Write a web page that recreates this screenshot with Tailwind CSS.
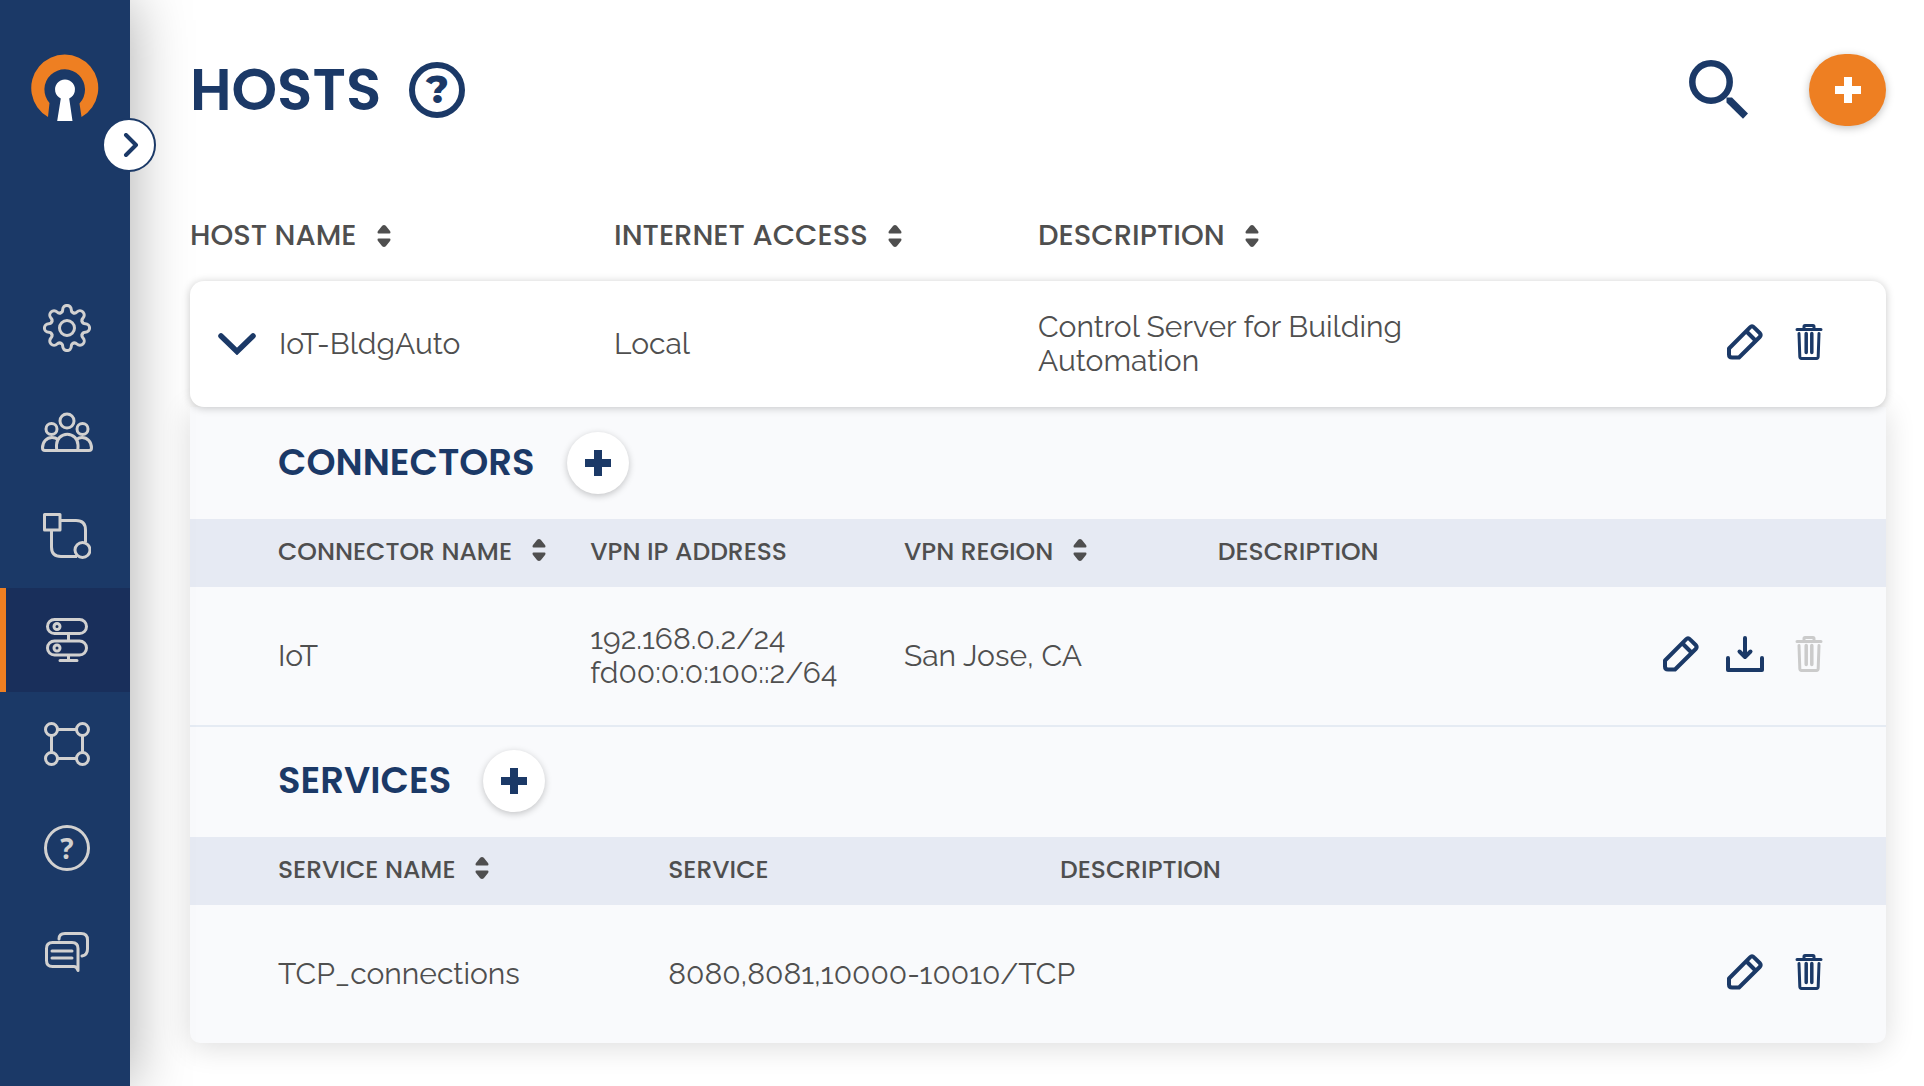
<!DOCTYPE html>
<html lang="en">
<head>
<meta charset="utf-8">
<meta name="viewport" content="width=device-width, initial-scale=1">
<title>Hosts</title>
<script src="https://cdn.jsdelivr.net/npm/@tailwindcss/browser@4"></script>
</head>
<body class="bg-white font-[Poppins,Inter,sans-serif] text-[#4f4f4f]">
<svg class="hidden" aria-hidden="true">
  <symbol id="sort" viewBox="0 0 14 22"><path fill="currentColor" d="M5.200.8Q7-.8 8.800.8L13.200 6.200Q14 8.400 12.500 8.600H1.500Q0 8.400.8 6.200ZM5.200 21.200Q7 22.800 8.800 21.200L13.200 15.800Q14 13.600 12.500 13.400H1.500Q0 13.600.8 15.800Z"/></symbol>
  <symbol id="pencil" viewBox="0 0 36 36"><g fill="none" stroke="currentColor" stroke-width="4" stroke-linejoin="round"><path d="M2 24.500 23 3.300Q25 1.200 27 3.300L32.700 9Q34.700 11 32.700 13L12 33.500H5Q2 33.500 2 30.500Z"/><path d="M19.500 7.500 28.500 16.500"/></g></symbol>
  <symbol id="trash" viewBox="0 0 28 36"><g fill="none" stroke="currentColor" stroke-width="3" stroke-linecap="round" stroke-linejoin="round"><path d="M2 5.500H26M9 5V2.500Q9 1.500 10 1.500H18Q19 1.500 19 2.500V5M4 9.500 4.800 32.500Q4.900 34.500 6.500 34.500H21.500Q23.100 34.500 23.200 32.500L24 9.500"/><path stroke-width="3.500" d="M11.200 9.500V28.500M16.800 9.500V28.500"/></g></symbol>
  <symbol id="plus" viewBox="0 0 26 26"><path fill="currentColor" d="M9 0H17V9H26V17H17V26H9V17H0V9H9Z"/></symbol>
</svg>
<div class="flex min-h-screen">
  <aside class="relative z-10 w-[130px] shrink-0 bg-[#1b3967] shadow-[0_0_60px_rgba(0,0,0,0.34)]">
    <a href="#" aria-label="Home" class="flex justify-center pt-[54px]">
      <svg class="h-[67px] w-[68px]" viewBox="0 0 68 67">
        <path fill="#ee7f22" d="M17 63A33.500 33.500 0 1 1 50.500 63L48.500 49.500A20.300 20.300 0 1 0 18.500 49Z"/>
        <path fill="#fff" d="M29.800 44.500A10 10 0 1 1 38.200 44.500L41.500 67H26.200Z"/>
      </svg>
    </a>
    <button aria-label="Expand menu" class="absolute top-[118px] -right-[26px] flex h-[54px] w-[54px] items-center justify-center rounded-full border-2 border-[#1b3967] bg-white">
      <svg class="h-6 w-5" viewBox="0 0 20 24" fill="none" stroke="#1b3967" stroke-width="4" stroke-linecap="round" stroke-linejoin="round"><path d="M7 2 17 12 7 22"/></svg>
    </button>
    <nav aria-label="Main" class="mt-[155px] text-[#d2d1d0]">
      <a href="#" aria-label="Settings" class="flex h-[104px] items-center justify-center border-l-[6px] border-transparent pr-0.5">
        <svg class="size-12" viewBox="0 0 48 48" fill="none" stroke="currentColor" stroke-width="3" stroke-linecap="round">
          <circle cx="24" cy="24" r="7.500"/>
          <path id="tooth" d="M17.700 8.800C19.500 8.200 19.700 7.500 19.700 5.700A4.300 4.300 0 0 1 28.300 5.700C28.300 7.500 28.500 8.200 30.300 8.800"/>
          <use href="#tooth" transform="rotate(45 24 24)"/><use href="#tooth" transform="rotate(90 24 24)"/><use href="#tooth" transform="rotate(135 24 24)"/><use href="#tooth" transform="rotate(180 24 24)"/><use href="#tooth" transform="rotate(225 24 24)"/><use href="#tooth" transform="rotate(270 24 24)"/><use href="#tooth" transform="rotate(315 24 24)"/>
        </svg>
      </a>
      <a href="#" aria-label="Users" class="flex h-[104px] items-center justify-center border-l-[6px] border-transparent pr-0.5">
        <svg class="h-10 w-[52px]" viewBox="0 0 52 40" fill="none" stroke="currentColor" stroke-width="3" stroke-linejoin="round">
          <circle cx="26" cy="9" r="7"/><circle cx="10.500" cy="17" r="5.500"/><circle cx="41.500" cy="17" r="5.500"/>
          <path d="M16.500 38.500Q15.500 38.500 15.500 35V33A10.500 10.500 0 0 1 37 33V35Q37 38.500 36 38.500Z"/>
          <path d="M17 27.500Q14.500 25.500 11 25.500C5.500 25.500 1.500 30 1.500 36Q1.500 38.500 4 38.500H17M35.500 27.500Q38 25.500 41 25.500C46.500 25.500 50.500 30 50.500 36Q50.500 38.500 48 38.500H35.500"/>
        </svg>
      </a>
      <a href="#" aria-label="Routes" class="flex h-[104px] items-center justify-center border-l-[6px] border-transparent pr-0.5">
        <svg class="h-[46px] w-12" viewBox="0 0 48 46" fill="none" stroke="currentColor" stroke-width="3" stroke-linejoin="round">
          <rect x="1.500" y="1.500" width="15.500" height="15.500"/><path d="M17 7.500H33Q42.500 7.500 42.500 17V29M8.500 17V34Q8.500 43.500 18 43.500H34"/><circle cx="39.500" cy="37" r="7.500"/>
        </svg>
      </a>
      <a href="#" aria-label="Hosts" aria-current="page" class="flex h-[104px] items-center justify-center border-l-[6px] border-[#ee7f22] bg-[#192f5b] pr-0.5">
        <svg class="h-11 w-[42px]" viewBox="0 0 42 44" fill="none" stroke="currentColor" stroke-width="3" stroke-linecap="round">
          <rect x="1.500" y="1.500" width="39" height="14" rx="7"/><rect x="1.500" y="23" width="39" height="14" rx="7"/><circle cx="11" cy="8.500" r="3"/><circle cx="11" cy="30" r="3"/><path d="M22.500 17V22M22.500 38V42M14 42.500H31"/>
        </svg>
      </a>
      <a href="#" aria-label="Networks" class="flex h-[104px] items-center justify-center border-l-[6px] border-transparent pr-0.5">
        <svg class="h-11 w-[46px]" viewBox="0 0 46 44" fill="none" stroke="currentColor" stroke-width="3">
          <circle cx="7.500" cy="7.500" r="6"/><circle cx="38.500" cy="7.500" r="6"/><circle cx="7.500" cy="36.500" r="6"/><circle cx="38.500" cy="36.500" r="6"/><path d="M13.500 7.500H32.500M13.500 36.500H32.500M7.500 13.500V30.500M38.500 13.500V30.500"/>
        </svg>
      </a>
      <a href="#" aria-label="Help" class="flex h-[104px] items-center justify-center border-l-[6px] border-transparent pr-0.5">
        <span class="flex size-[46px] items-center justify-center rounded-full border-[3px] border-current font-['Open_Sans',sans-serif] text-[28px] font-bold">?</span>
      </a>
      <a href="#" aria-label="Messages" class="flex h-[104px] items-center justify-center border-l-[6px] border-transparent pr-0.5">
        <svg class="h-10 w-11" viewBox="0 0 44 40" fill="none" stroke="currentColor" stroke-width="3" stroke-linecap="round" stroke-linejoin="round">
          <path d="M14 7Q14 1.500 20 1.500H36Q42.500 1.500 42.500 8V17Q42.500 23 37 24"/><path d="M7.500 10.500H27Q33 10.500 33 16.500V38.500Q31.500 34.500 29 34.500H7.500Q1.500 34.500 1.500 28.500V16.500Q1.500 10.500 7.500 10.500Z"/><path d="M7 19H27M7 26H27"/>
        </svg>
      </a>
    </nav>
  </aside>

  <main class="min-w-0 flex-1 pt-[54px] pr-[38px] pb-10 pl-[60px]">
    <header class="flex h-[72px] items-center">
      <h1 class="text-[58px] leading-[72px] font-semibold text-[#1b3967]">HOSTS</h1>
      <button aria-label="About hosts" class="ml-7 flex size-14 items-center justify-center rounded-full border-[6px] border-[#1b3967] font-[Montserrat,Inter,sans-serif] text-[38px] leading-none font-extrabold text-[#1b3967]">?</button>
      <button aria-label="Search" class="ml-auto">
        <svg class="size-[60px]" viewBox="0 0 60 60" fill="none" stroke="#1b3967" stroke-width="6.500"><circle cx="22" cy="22" r="18.700"/><path fill="#1b3967" stroke="none" d="M37.500 37.500H43L59 53.500 54 58.800 37.500 42.500Z"/></svg>
      </button>
      <button aria-label="Add host" class="ml-[60px] flex h-[72px] w-[77px] items-center justify-center rounded-full bg-[#ee7f22] text-white shadow-[0_2px_8px_rgba(0,0,0,0.25)]"><svg class="size-[26px]"><use href="#plus"/></svg></button>
    </header>

    <table class="relative z-10 mt-16 block w-full text-left">
      <thead class="block">
        <tr class="grid h-[91px] grid-cols-4 items-center text-[29px] whitespace-nowrap">
          <th class="p-0 font-medium"><button class="flex items-center gap-5">HOST NAME <svg class="h-[22px] w-3.5"><use href="#sort"/></svg></button></th>
          <th class="p-0 font-medium"><button class="flex items-center gap-5">INTERNET ACCESS <svg class="h-[22px] w-3.5"><use href="#sort"/></svg></button></th>
          <th class="p-0 font-medium"><button class="flex items-center gap-5">DESCRIPTION <svg class="h-[22px] w-3.5"><use href="#sort"/></svg></button></th>
          <th aria-label="Actions"></th>
        </tr>
      </thead>
      <tbody class="block">
        <tr class="grid h-[126px] grid-cols-4 items-center rounded-[14px] bg-white font-[Raleway,Lato,sans-serif] text-[30px] leading-[34px] shadow-[0_1px_8px_rgba(0,0,0,0.22)]">
          <td class="p-0"><div class="flex items-center gap-[23px] pl-7">
            <button aria-label="Collapse IoT-BldgAuto" aria-expanded="true"><svg class="h-[22px] w-[38px]" viewBox="0 0 38 22" fill="none" stroke="#1b3967" stroke-width="5.500" stroke-linecap="round"><path d="M3 3 19 18.500 35 3"/></svg></button>IoT-BldgAuto</div></td>
          <td class="p-0">Local</td>
          <td class="p-0">Control Server for Building Automation</td>
          <td class="p-0"><div class="flex justify-end gap-6 pr-[57px] pb-1 text-[#1b3967]">
            <button aria-label="Edit host" class="flex size-10 items-center justify-center"><svg class="size-9"><use href="#pencil"/></svg></button>
            <button aria-label="Delete host" class="flex size-10 items-center justify-center"><svg class="h-9 w-7"><use href="#trash"/></svg></button>
          </div></td>
        </tr>
      </tbody>
    </table>

    <div class="rounded-b-[10px] bg-[#f9fafc] shadow-[0_4px_30px_rgba(0,0,0,0.14)]">
      <section aria-labelledby="connectors" class="border-b-2 border-[#e5ebf3]">
        <div class="flex h-28 items-center gap-8 pl-[88px]">
          <h2 id="connectors" class="text-[37px] font-semibold text-[#1b3967]">CONNECTORS</h2>
          <button aria-label="Add connector" class="flex size-[62px] items-center justify-center rounded-full bg-white text-[#1b3967] shadow-[0_2px_7px_rgba(0,0,0,0.22)]"><svg class="size-[26px]"><use href="#plus"/></svg></button>
        </div>
        <table class="w-full table-fixed border-separate border-spacing-0 text-left">
          <thead>
            <tr class="h-[68px] bg-[#e6eaf3] text-[25px] whitespace-nowrap">
              <th class="w-[23.6%] p-0 pb-0.5 pl-[88px] font-medium"><button class="flex items-center gap-5">CONNECTOR NAME <svg class="mb-1 h-[22px] w-3.5"><use href="#sort"/></svg></button></th>
              <th class="w-[18.5%] p-0 pb-0.5 font-medium">VPN IP ADDRESS</th>
              <th class="w-[18.5%] p-0 pb-0.5 font-medium"><button class="flex items-center gap-5">VPN REGION <svg class="mb-1 h-[22px] w-3.5"><use href="#sort"/></svg></button></th>
              <th class="w-[18.5%] p-0 pb-0.5 font-medium">DESCRIPTION</th>
              <th aria-label="Actions"></th>
            </tr>
          </thead>
          <tbody>
            <tr class="h-[138px] font-[Raleway,Lato,sans-serif] text-[30px] leading-[34px]">
              <td class="p-0 pl-[88px]">IoT</td>
              <td class="p-0">192.168.0.2/24<br>fd00:0:0:100::2/64</td>
              <td class="p-0">San Jose, CA</td>
              <td class="p-0"></td>
              <td class="p-0"><div class="flex justify-end gap-6 pr-[57px] pb-1 text-[#1b3967]">
                <button aria-label="Edit connector" class="flex size-10 items-center justify-center"><svg class="size-9"><use href="#pencil"/></svg></button>
                <button aria-label="Download profile" class="flex size-10 items-center justify-center"><svg class="h-9 w-10" viewBox="0 0 40 36" fill="none" stroke="currentColor" stroke-width="4" stroke-linecap="round" stroke-linejoin="round"><path d="M3 22V34H37V22M20 2V20M14.500 15.500 20 21 25.500 15.500"/></svg></button>
                <button aria-label="Delete connector" disabled class="flex size-10 items-center justify-center text-[#cbcbcb]"><svg class="h-9 w-7"><use href="#trash"/></svg></button>
              </div></td>
            </tr>
          </tbody>
        </table>
      </section>
      <section aria-labelledby="services">
        <div class="flex h-[110px] items-center gap-8 pb-0.5 pl-[88px]">
          <h2 id="services" class="text-[37px] font-semibold text-[#1b3967]">SERVICES</h2>
          <button aria-label="Add service" class="flex size-[62px] items-center justify-center rounded-full bg-white text-[#1b3967] shadow-[0_2px_7px_rgba(0,0,0,0.22)]"><svg class="size-[26px]"><use href="#plus"/></svg></button>
        </div>
        <table class="w-full table-fixed border-separate border-spacing-0 text-left">
          <thead>
            <tr class="h-[68px] bg-[#e6eaf3] text-[25px] whitespace-nowrap">
              <th class="w-[28.2%] p-0 pb-0.5 pl-[88px] font-medium"><button class="flex items-center gap-5">SERVICE NAME <svg class="mb-1 h-[22px] w-3.5"><use href="#sort"/></svg></button></th>
              <th class="w-[23.1%] p-0 pb-0.5 font-medium">SERVICE</th>
              <th class="w-[23.1%] p-0 pb-0.5 font-medium">DESCRIPTION</th>
              <th aria-label="Actions"></th>
            </tr>
          </thead>
          <tbody>
            <tr class="h-[138px] font-[Raleway,Lato,sans-serif] text-[30px] leading-[34px]">
              <td class="p-0 pl-[88px]">TCP_connections</td>
              <td class="p-0 whitespace-nowrap">8080,8081,10000-10010/TCP</td>
              <td class="p-0"></td>
              <td class="p-0"><div class="flex justify-end gap-6 pr-[57px] pb-1 text-[#1b3967]">
                <button aria-label="Edit service" class="flex size-10 items-center justify-center"><svg class="size-9"><use href="#pencil"/></svg></button>
                <button aria-label="Delete service" class="flex size-10 items-center justify-center"><svg class="h-9 w-7"><use href="#trash"/></svg></button>
              </div></td>
            </tr>
          </tbody>
        </table>
      </section>
    </div>
  </main>
</div>
</body>
</html>
